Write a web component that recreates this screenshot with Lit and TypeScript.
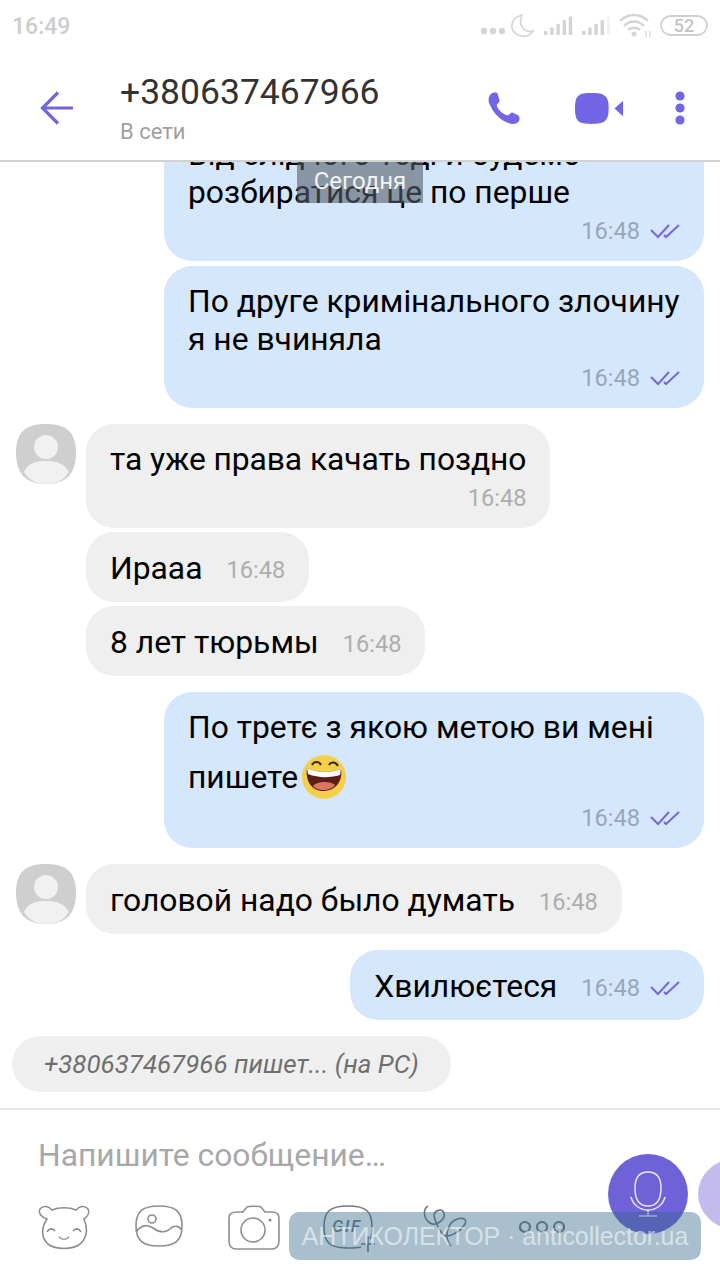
import { LitElement, html, css, svg } from "lit";
import { customElement } from "lit/decorators.js";

const checks = html`<svg class="checks" width="30" height="16" viewBox="0 0 30 16"><path d="M1 7l7 7L19 2M14 12l2 2L29 2" fill="none" stroke="#7467d8" stroke-width="2"/></svg>`;

const avatar = html`<svg class="avatar" width="60" height="60" viewBox="0 0 60 60">
  <path d="M30 0C50 0 60 8 60 28C60 50 50 60 30 60C10 60 0 50 0 28C0 8 10 0 30 0Z" fill="#cfcfcf"/>
  <circle cx="30" cy="23" r="12" fill="#f1f1f1"/>
  <path d="M8 48C12 39 20 37 30 37C40 37 48 39 53 48C47 57 40 60 30 60C20 60 13 56 8 48Z" fill="#f1f1f1"/>
</svg>`;

const emoji = html`<svg class="emoji" width="44" height="44" viewBox="0 0 44 44">
  <circle cx="22" cy="22" r="22" fill="#f4cf4a"/>
  <path d="M5 13C15 18 29 18 39 14C41 27 33 36 21 36C10 36 3 26 5 13Z" fill="#5b1f16"/>
  <path d="M5 13C15 18 29 18 39 14L38 20C28 23 16 23 6 19Z" fill="#fff"/>
  <path d="M11 31C15 26 29 26 33 30C29 36 15 37 11 31Z" fill="#dd7560"/>
  <path d="M10 10C12 6 17 6 19 10M27 10C29 6 34 7 36 11" fill="none" stroke="#3a2a10" stroke-width="2"/>
</svg>`;

@customElement("app-root")
export class AppRoot extends LitElement {
  static styles = css`
    :host { display: block; width: 720px; height: 1280px; position: relative; overflow: hidden; background: #fff; font-family: Roboto, sans-serif; color: #000; }
    .page { height: 1280px; display: flex; flex-direction: column; }
    .status { height: 56px; flex: none; display: flex; align-items: center; justify-content: space-between; padding: 0 10px 4px 12px; box-sizing: border-box; }
    .clock { font-size: 23px; font-weight: 500; color: #cdcdcd; }
    .header { height: 106px; flex: none; box-sizing: border-box; border-bottom: 2px solid #d2d2d2; display: flex; align-items: center; padding: 0 0 0 40px; }
    .names { margin-left: 46px; flex: 1; }
    .title { font-size: 35.5px; line-height: 42px; color: #333; margin-top: 0; }
    .sub { font-size: 22px; line-height: 28px; color: #a0a0a0; margin-top: 5px; }
    .hicons { display: flex; align-items: center; }
    .hicons svg { display: block; }
    .list { flex: 1; min-height: 0; overflow: hidden; padding: 0 16px 0 0; display: flex; flex-direction: column; position: relative; }
    .row { display: flex; flex: none; }
    .row.out { justify-content: flex-end; }
    .row.in { padding-left: 16px; gap: 10px; }
    .avatar { flex: none; display: block; }
    .spacer { width: 60px; flex: none; }
    .bubble { box-sizing: border-box; border-radius: 28px; padding: 16px 24px 0; font-size: 31.8px; line-height: 38px; white-space: nowrap; }
    .out .bubble { background: #d5e7fc; }
    .in .bubble { background: #efefef; }
    .wide { width: 540px; }
    .tight { letter-spacing: -0.08px; }
    .meta { display: flex; justify-content: flex-end; align-items: center; gap: 10px; height: 38px; margin-top: 1px; font-size: 23.6px; letter-spacing: 0; color: #98a7b7; }
    .in .meta { color: #adadad; }
    .checks { display: block; flex: none; }
    .one { display: flex; align-items: center; height: 70px; padding: 2px 24px 0; gap: 24px; white-space: nowrap; }
    .one .meta { height: auto; margin-top: 4px; }
    .emoji { display: inline-block; vertical-align: middle; margin-left: 4px; position: relative; top: -3px; }
    .tall { line-height: 50px; padding-top: 10px; }
    .tall .meta { margin-top: -3px; line-height: 38px; }
    .typing { flex: none; margin: 16px 0 0 12px; width: 439px; height: 56px; box-sizing: border-box; border-radius: 28px; background: #efefef; padding-left: 32px; display: flex; align-items: center; font-size: 25.9px; font-style: italic; color: #6f6f6f; white-space: nowrap; }
    .date { position: absolute; left: 297px; top: 0; width: 126px; height: 41px; background: rgba(85,95,105,.6); color: #f3f3f3; font-size: 24px; display: flex; align-items: center; justify-content: center; padding-bottom: 4px; box-sizing: border-box; }
    .composer { height: 172px; flex: none; box-sizing: border-box; border-top: 2px solid #e6e6e6; padding: 24px 0 0 38px; }
    .placeholder { font-size: 31.8px; line-height: 42px; color: #a8a8a8; white-space: nowrap; }
    .tools { display: flex; align-items: flex-start; margin-top: 29px; }
    .tools svg { display: block; flex: none; }
    .mic { position: absolute; left: 608px; top: 1154px; width: 80px; height: 80px; border-radius: 50%; background: #6f62d8; display: flex; align-items: center; justify-content: center; }
    .next { position: absolute; left: 698px; top: 1158px; width: 80px; height: 72px; border-radius: 50%; background: #c3bbee; }
    .mark { position: absolute; left: 289px; top: 1212px; width: 412px; height: 48px; border-radius: 10px; background: rgba(50,102,138,.42); color: rgba(255,255,255,.55); font-family: "Liberation Sans", sans-serif; font-size: 24.9px; display: flex; align-items: center; justify-content: center; white-space: nowrap; }
  `;

  private statusIcons() {
    return html`<svg width="230" height="30" viewBox="0 0 230 30" fill="none">
      <g fill="#d4d4d4"><circle cx="4" cy="20" r="3.2"/><circle cx="13" cy="20" r="3.2"/><circle cx="22" cy="20" r="3.2"/></g>
      <path d="M42 4C34 6 31 12 32 17C34 24 43 27 49 24C51 23 52 22 53 20C46 22 37 16 42 4Z" stroke="#d4d4d4" stroke-width="1.6"/>
      ${[0, 38].map(o => svg`<g fill="#d4d4d4">${[0, 1, 2, 3, 4].map(i => svg`<rect x="${64 + o + i * 6.2}" y="${20 - i * 3.6}" width="${3.4}" height="${4 + i * 3.6}" opacity="${o && i === 4 ? .3 : 1}"/>`)}</g>`)}
      <path d="M140 10C148 2 160 2 168 10M144 15C150 9 158 9 164 15M148 19C151 16 157 16 160 19" stroke="#d4d4d4" stroke-width="2.4"/>
      <circle cx="154" cy="23" r="2.5" fill="#d4d4d4"/>
      <path d="M166 20V26M170 20V26" stroke="#d4d4d4" stroke-width="1.2"/>
      <rect x="181" y="5" width="46" height="19" rx="9.5" stroke="#d0d0d0" stroke-width="1.8"/>
      <text x="204" y="21" text-anchor="middle" font-family="Roboto" font-size="18" font-weight="500" fill="#c4c4c4">52</text>
    </svg>`;
  }

  private tools() {
    return html`
      <svg style="margin-right:45px" width="52" height="45" viewBox="0 0 52 45" fill="none" stroke="#8e8e8e" stroke-width="1.6">
        <path d="M9 14C3 12 0 8 2 4C5 0 11 1 14 5C21 2 31 2 38 5C41 1 47 0 50 4C52 8 49 12 46 14C50 24 49 33 42 39C34 45 18 45 10 39C3 33 3 23 9 14Z"/>
        <path d="M9 27C11 23 15 23 17 26M35 26C37 23 41 23 43 27M21 32C24 35 28 35 31 32"/>
      </svg>
      <svg style="margin-right:45px" width="48" height="42" viewBox="0 0 48 42" fill="none" stroke="#8e8e8e" stroke-width="1.6">
        <path d="M24 1C40 1 47 6 47 21C47 36 40 41 24 41C8 41 1 36 1 21C1 6 8 1 24 1Z"/>
        <circle cx="17" cy="14" r="4"/>
        <path d="M1 27C6 20 12 19 18 23C25 28 31 28 36 23C40 20 44 21 47 25"/>
      </svg>
      <svg style="margin-right:43px" width="52" height="45" viewBox="0 0 52 45" fill="none" stroke="#8e8e8e" stroke-width="1.6">
        <path d="M9 7H15L19 2C20 1 32 1 33 2L37 7H44C48 7 51 9 51 13V36C51 41 48 44 44 44H8C4 44 1 41 1 36V13C1 9 4 7 9 7Z"/>
        <circle cx="25" cy="25" r="12"/>
        <circle cx="42" cy="15" r="1.6" fill="#8e8e8e" stroke="none"/>
      </svg>
      <svg style="margin-right:48px" width="52" height="48" viewBox="0 0 52 48" fill="none" stroke="#6f7a84" stroke-width="1.6">
        <path d="M38 42C34 43 30 43 25 43C7 43 1 38 1 22C1 6 7 1 25 1C43 1 49 6 49 22C49 27 49 31 47 34"/>
        <path d="M45 31V47M38 39H52"/>
        <text x="9" y="27" font-family="Roboto" font-size="17" font-style="italic" font-weight="500" fill="#6f7a84" stroke="none" letter-spacing="1.5">GIF</text>
      </svg>
      <svg style="margin-right:50px" width="46" height="42" viewBox="0 0 46 42" fill="none" stroke="#6f7a84" stroke-width="1.6">
        <path d="M5 1C0 4 0 13 7 18C13 22 23 14 21 8C19 3 11 5 11 11C13 20 18 27 19 28"/>
        <path d="M19 28C23 36 38 26 42 19C45 13 38 12 32 15C26 18 22 28 25 36C26 39 27 40 28 41"/>
      </svg>
      <svg width="46" height="16" viewBox="0 0 46 16" fill="none" stroke="#6f7a84" stroke-width="2.2" style="margin-top:14px">
        <circle cx="6" cy="8" r="5"/><circle cx="23" cy="8" r="5"/><circle cx="40" cy="8" r="5"/>
      </svg>`;
  }

  render() {
    return html`
      <div class="page">
        <div class="status"><span class="clock">16:49</span>${this.statusIcons()}</div>
        <div class="header">
          <svg width="34" height="34" viewBox="0 0 34 34" fill="none" stroke="#7366dc" stroke-width="3.2"><path d="M18 1.5L2.5 17L18 32.5M3 17H33"/></svg>
          <div class="names"><div class="title">+380637467966</div><div class="sub">В сети</div></div>
          <div class="hicons">
            <svg style="margin-right:54px" width="33" height="33" viewBox="0 0 34 34"><path d="M3 2C6 0 9 0 10 2L12 9C12 11 9 12 9 14C10 18 15 23 20 24C22 24 23 21 25 21L31 24C33 26 33 29 31 31C28 34 24 33 21 32C11 28 5 21 1 11C0 7 1 4 3 2Z" fill="#7366e6"/></svg>
            <svg style="margin-right:50px" width="50" height="33" viewBox="0 0 52 34"><path d="M17 1C30 1 35 3 35 17C35 31 30 33 17 33C4 33 0 31 0 17C0 3 4 1 17 1Z" fill="#7366e6"/><path d="M41 17L50 9V25Z" fill="#7366e6"/></svg>
            <svg style="margin-right:35px" width="10" height="34" viewBox="0 0 10 34" fill="#7366e6"><circle cx="5" cy="5" r="4.6"/><circle cx="5" cy="17" r="4.6"/><circle cx="5" cy="29" r="4.6"/></svg>
          </div>
        </div>
        <div class="list">
          <div class="row out" style="margin-top:-43px"><div class="bubble wide" style="height:142px">Від слідчого тоді и будемо<br>розбиратися це по перше<div class="meta">16:48 ${checks}</div></div></div>
          <div class="row out" style="margin-top:5px"><div class="bubble wide" style="height:142px">По друге кримінального злочину<br>я не вчиняла<div class="meta">16:48 ${checks}</div></div></div>
          <div class="row in" style="margin-top:16px">${avatar}<div class="bubble tight" style="height:104px">та уже права качать поздно<div class="meta">16:48</div></div></div>
          <div class="row in" style="margin-top:4px"><div class="spacer"></div><div class="bubble one">Ирааа<span class="meta">16:48</span></div></div>
          <div class="row in" style="margin-top:4px"><div class="spacer"></div><div class="bubble one">8 лет тюрьмы<span class="meta">16:48</span></div></div>
          <div class="row out" style="margin-top:16px"><div class="bubble wide tall" style="height:156px">По третє з якою метою ви мені<br>пишете${emoji}<div class="meta">16:48 ${checks}</div></div></div>
          <div class="row in" style="margin-top:16px">${avatar}<div class="bubble one">головой надо было думать<span class="meta">16:48</span></div></div>
          <div class="row out" style="margin-top:16px"><div class="bubble one">Хвилюєтеся<span class="meta">16:48 ${checks}</span></div></div>
          <div class="typing">+380637467966 пишет... (на PC)</div>
          <div class="date">Сегодня</div>
        </div>
        <div class="composer">
          <div class="placeholder">Напишите сообщение…</div>
          <div class="tools">${this.tools()}</div>
        </div>
      </div>
      <div class="next"></div>
      <div class="mic"><svg width="36" height="46" viewBox="0 0 36 46" fill="none" stroke="#e8e4fa" stroke-width="1.5"><path d="M18 1C27 1 31 7 31 17C31 29 27 35 18 35C9 35 5 29 5 17C5 7 9 1 18 1Z"/><path d="M1 26C3 34 10 39 18 39C26 39 33 34 35 26M18 39V45M9 45H27"/></svg></div>
      <div class="mark">АНТИКОЛЕКТОР · anticollector.ua</div>
    `;
  }
}
